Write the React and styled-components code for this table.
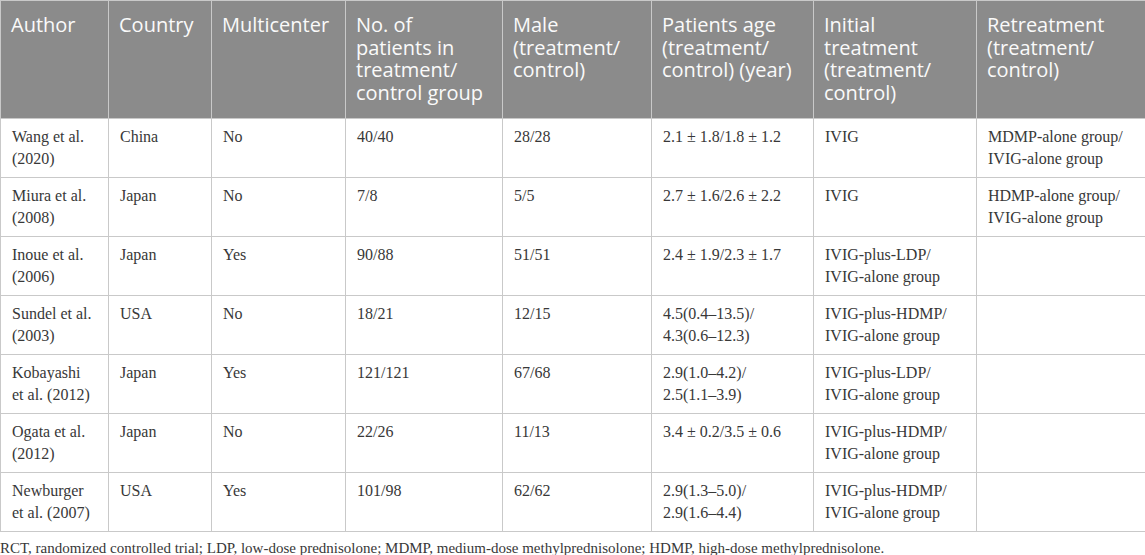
import React from "react";
import styled, { createGlobalStyle } from "styled-components";

const GlobalStyle = createGlobalStyle`
  html, body {
    margin: 0;
    padding: 0;
    background: #fff;
  }
`;

const Page = styled.div`
  width: 1145px;
  display: flex;
  flex-direction: column;
`;

const Table = styled.table`
  width: 1145px;
  table-layout: fixed;
  border-collapse: collapse;
  border: 1px solid #c9c9c9;
`;

const HeadCell = styled.th`
  background: #8b8b8b;
  color: #fafafa;
  font-family: "Open Sans", "Liberation Sans", sans-serif;
  font-weight: 400;
  font-size: 20px;
  line-height: 22.5px;
  text-align: left;
  vertical-align: top;
  padding: 13px 10px 14px;
  border: 1px solid #c9c9c9;
  border-top: none;
`;

const Cell = styled.td`
  font-family: "Liberation Serif", "Times New Roman", serif;
  font-size: 16px;
  line-height: 22px;
  color: #383838;
  vertical-align: top;
  padding: 7px 10px 7px 11px;
  border: 1px solid #c9c9c9;
`;

const Line = styled.span`
  display: block;
  white-space: nowrap;
`;

const Footnote = styled.p`
  margin: 7px 0 0;
  font-family: "Liberation Serif", "Times New Roman", serif;
  font-size: 15px;
  line-height: 18px;
  color: #383838;
`;

const columns = [
  { label: "Author", width: 108 },
  { label: "Country", width: 103 },
  { label: "Multicenter", width: 134 },
  { label: "No. of patients in treatment/ control group", width: 157 },
  { label: "Male (treatment/ control)", width: 149 },
  { label: "Patients age (treatment/ control) (year)", width: 162 },
  { label: "Initial treatment (treatment/ control)", width: 163 },
  { label: "Retreatment (treatment/ control)", width: 169 },
];

// "|" marks where the printed table breaks a line
const rows = [
  ["Wang et al.|(2020)", "China", "No", "40/40", "28/28", "2.1 ± 1.8/1.8 ± 1.2", "IVIG", "MDMP-alone group/|IVIG-alone group"],
  ["Miura et al.|(2008)", "Japan", "No", "7/8", "5/5", "2.7 ± 1.6/2.6 ± 2.2", "IVIG", "HDMP-alone group/|IVIG-alone group"],
  ["Inoue et al.|(2006)", "Japan", "Yes", "90/88", "51/51", "2.4 ± 1.9/2.3 ± 1.7", "IVIG-plus-LDP/|IVIG-alone group", ""],
  ["Sundel et al.|(2003)", "USA", "No", "18/21", "12/15", "4.5(0.4–13.5)/|4.3(0.6–12.3)", "IVIG-plus-HDMP/|IVIG-alone group", ""],
  ["Kobayashi|et al. (2012)", "Japan", "Yes", "121/121", "67/68", "2.9(1.0–4.2)/|2.5(1.1–3.9)", "IVIG-plus-LDP/|IVIG-alone group", ""],
  ["Ogata et al.|(2012)", "Japan", "No", "22/26", "11/13", "3.4 ± 0.2/3.5 ± 0.6", "IVIG-plus-HDMP/|IVIG-alone group", ""],
  ["Newburger|et al. (2007)", "USA", "Yes", "101/98", "62/62", "2.9(1.3–5.0)/|2.9(1.6–4.4)", "IVIG-plus-HDMP/|IVIG-alone group", ""],
];

const App = () => (
  <Page>
    <GlobalStyle />
    <Table>
      <colgroup>
        {columns.map(c => (
          <col key={c.label} style={{ width: `${c.width}px` }} />
        ))}
      </colgroup>
      <thead>
        <tr>
          {columns.map(c => (
            <HeadCell key={c.label}>{c.label}</HeadCell>
          ))}
        </tr>
      </thead>
      <tbody>
        {rows.map(r => (
          <tr key={r[0]}>
            {r.map((v, i) => (
              <Cell key={i}>
                {v.split("|").map((part, j) => (
                  <Line key={j}>{part}</Line>
                ))}
              </Cell>
            ))}
          </tr>
        ))}
      </tbody>
    </Table>
    <Footnote>
      RCT, randomized controlled trial; LDP, low-dose prednisolone; MDMP,
      medium-dose methylprednisolone; HDMP, high-dose methylprednisolone.
    </Footnote>
  </Page>
);

export default App;
